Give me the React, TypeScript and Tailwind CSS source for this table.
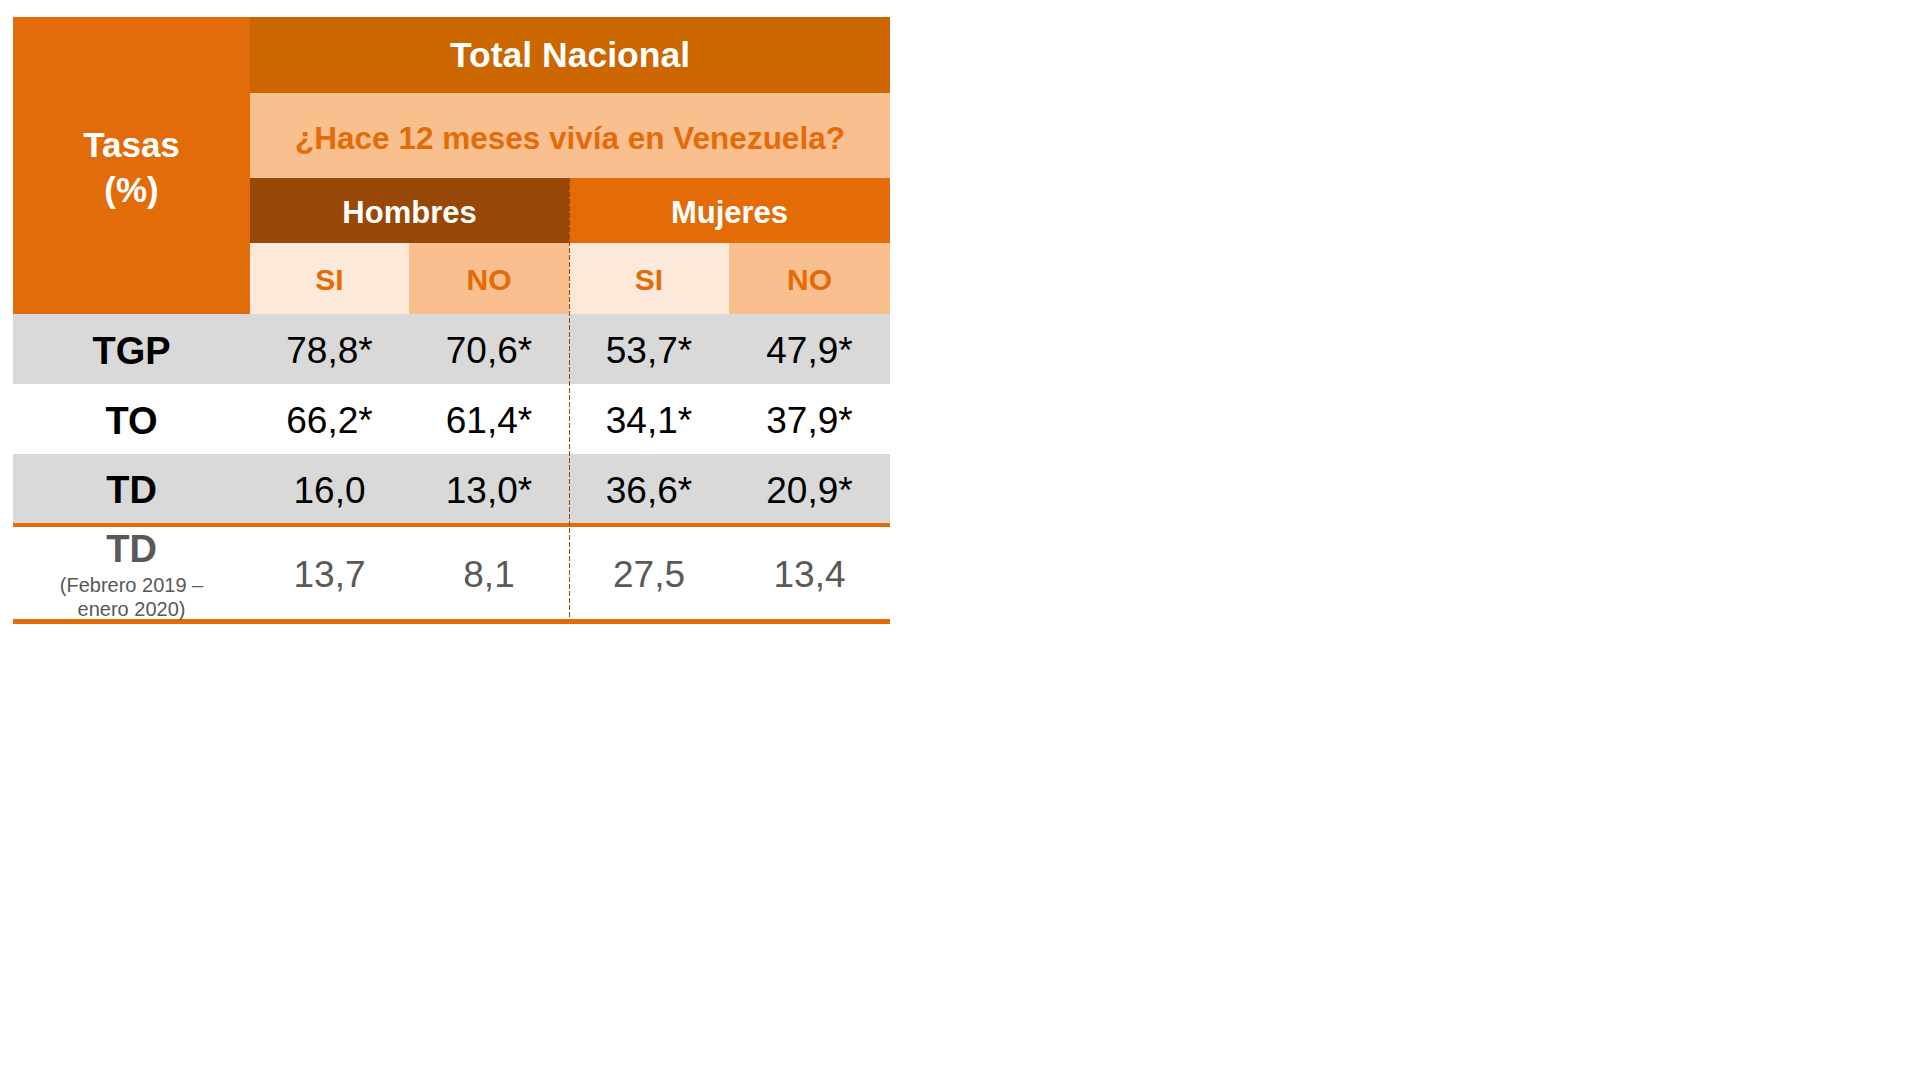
const FONT = "font-['Liberation_Sans',Arial,sans-serif]"

const COLS = 'grid grid-cols-[237px_159px_160px_160px_161px]'

type Row = { label: string; values: string[]; shaded: boolean }

const ROWS: Row[] = [
  { label: 'TGP', values: ['78,8*', '70,6*', '53,7*', '47,9*'], shaded: true },
  { label: 'TO', values: ['66,2*', '61,4*', '34,1*', '37,9*'], shaded: false },
  { label: 'TD', values: ['16,0', '13,0*', '36,6*', '20,9*'], shaded: true },
]

const PREV = ['13,7', '8,1', '27,5', '13,4']

function DataRow({ row, last }: { row: Row; last: boolean }) {
  return (
    <div
      className={`${COLS} h-[70px] ${row.shaded ? 'bg-[#d9d9d9]' : 'bg-white'} ${
        last ? 'h-[73px] border-b-4 border-[#e36c09]' : ''
      }`}
    >
      <div className="flex items-center justify-center pt-1 text-[38px] font-bold text-black">
        {row.label}
      </div>
      {row.values.map((v, i) => (
        <div key={i} className="flex items-center justify-center pt-1 text-[37px] text-black">
          {v}
        </div>
      ))}
    </div>
  )
}

export default function App() {
  return (
    <div className={`${FONT} min-h-screen bg-white pt-[17px] pl-[13px]`}>
      <div className="relative w-[877px]">
        {/* header block */}
        <div className={`${COLS} grid-rows-[76px_85px_65px_71px]`}>
          <div className="row-span-4 flex flex-col items-center justify-center bg-[#e26b0a] pt-[3px] text-[35px] font-bold leading-[45px] text-white">
            <span>Tasas</span>
            <span>(%)</span>
          </div>
          <div className="col-span-4 flex items-center justify-center bg-[#cc6600] pt-[2px] text-[35.5px] font-bold text-white">
            Total Nacional
          </div>
          <div className="col-span-4 flex items-center justify-center bg-[#f9bf8f] pt-[7px] text-[31.5px] font-bold text-[#e36c09]">
            ¿Hace 12 meses vivía en Venezuela?
          </div>
          <div className="col-span-2 flex items-center justify-center bg-[#974706] pt-[5px] text-[31px] font-bold text-white">
            Hombres
          </div>
          <div className="col-span-2 flex items-center justify-center bg-[#e36c09] pt-[5px] text-[31px] font-bold text-white">
            Mujeres
          </div>
          <div className="flex items-center justify-center bg-[#fde9d9] pt-[2px] text-[30px] font-bold text-[#e36c09]">
            SI
          </div>
          <div className="flex items-center justify-center bg-[#f9bf8f] pt-[2px] text-[30px] font-bold text-[#e36c09]">
            NO
          </div>
          <div className="flex items-center justify-center bg-[#fde9d9] pt-[2px] text-[30px] font-bold text-[#e36c09]">
            SI
          </div>
          <div className="flex items-center justify-center bg-[#f9bf8f] pt-[2px] text-[30px] font-bold text-[#e36c09]">
            NO
          </div>
        </div>

        {ROWS.map((r, i) => (
          <DataRow key={r.label} row={r} last={i === ROWS.length - 1} />
        ))}

        {/* previous period */}
        <div className={`${COLS} h-[97px] border-b-[5px] border-[#e36c09] text-[#595959]`}>
          <div className="flex flex-col items-center justify-center pt-[4px]">
            <span className="text-[38px] font-bold leading-[37px]">TD</span>
            <span className="mt-[5px] text-center text-[20px] leading-6">
              (Febrero 2019 –<br />
              enero 2020)
            </span>
          </div>
          {PREV.map((v, i) => (
            <div key={i} className="flex items-center justify-center pt-[2px] text-[37px]">
              {v}
            </div>
          ))}
        </div>

        {/* dashed divider between Hombres and Mujeres */}
        <div className="absolute left-[556px] top-[161px] h-[441px] w-px bg-[repeating-linear-gradient(to_bottom,#974706_0px,#974706_5px,transparent_5px,transparent_7px)]" />
      </div>
    </div>
  )
}
